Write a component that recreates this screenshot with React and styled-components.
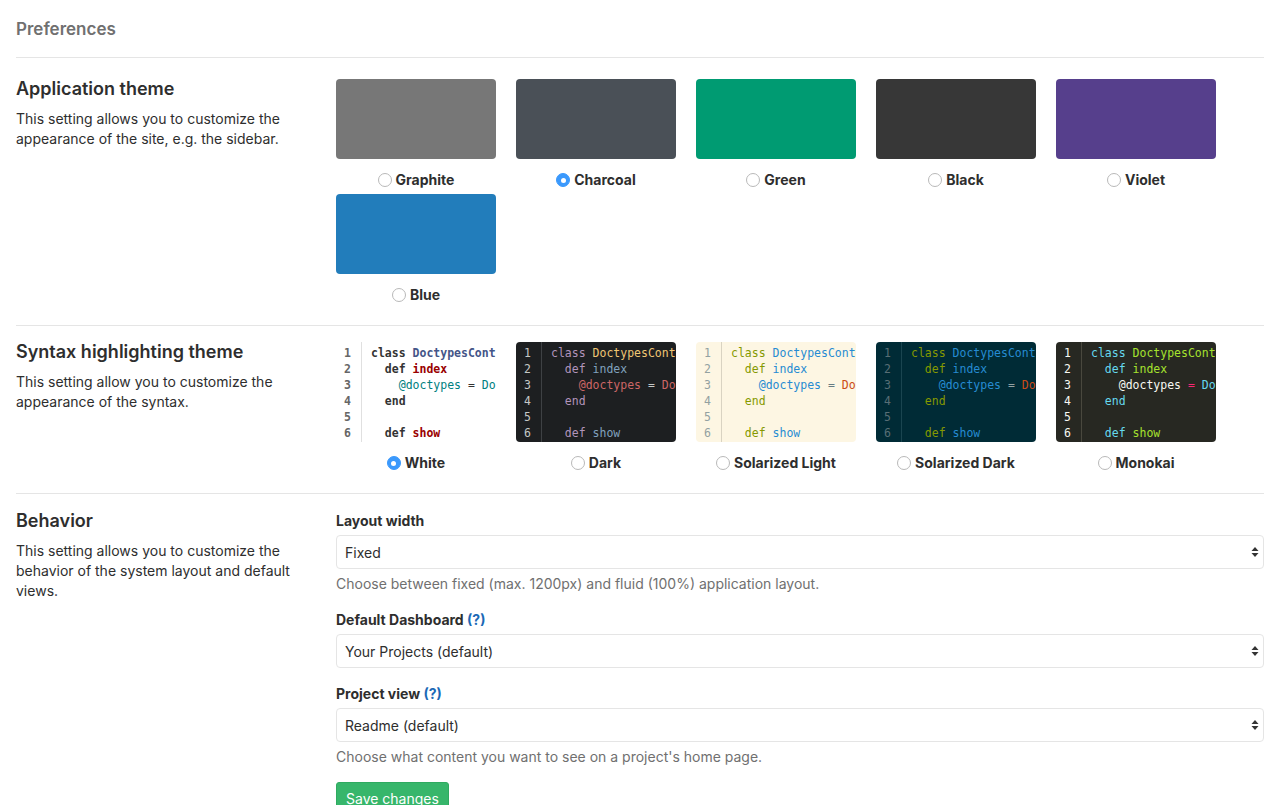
import React from "react";
import styled, { createGlobalStyle } from "styled-components";

const Global = createGlobalStyle`
  html, body { margin: 0; padding: 0; background: #fff; }
  body {
    font-family: Inter, "Noto Sans", "Liberation Sans", sans-serif;
    font-size: 14px;
    color: #2e2e2e;
    -webkit-font-smoothing: antialiased;
  }
  * { box-sizing: border-box; }
`;

const Page = styled.div`
  padding: 18px 16px 0;
`;

const Title = styled.h3`
  margin: 0;
  font-size: 17px;
  line-height: 22px;
  font-weight: 600;
  color: #707070;
`;

const Section = styled.section`
  display: grid;
  grid-template-columns: 304px 928px;
  column-gap: 16px;
  border-top: 1px solid #e5e5e5;
  margin-top: ${(p) => p.$mt || 0}px;
  padding-top: ${(p) => p.$pt}px;
  padding-bottom: ${(p) => p.$pb || 0}px;
`;

const Side = styled.div``;

const Heading = styled.h4`
  margin: 0 0 10px;
  font-size: 18px;
  line-height: 20px;
  font-weight: 600;
  color: #2e2e2e;
`;

const Desc = styled.p`
  margin: 0;
  line-height: 20px;
  color: #2e2e2e;
`;

const Options = styled.div`
  display: flex;
  flex-wrap: wrap;
  column-gap: 20px;
`;

const Option = styled.label`
  width: 160px;
  display: flex;
  flex-direction: column;
  align-items: center;
  margin-bottom: 4px;
`;

const Swatch = styled.div`
  width: 160px;
  height: 80px;
  border-radius: 4px;
  background: ${(p) => p.$color};
`;

const OptionName = styled.div`
  margin-top: 11px;
  display: flex;
  align-items: center;
  gap: 4px;
  font-weight: 700;
  line-height: 20px;
  color: #2e2e2e;
`;

const Radio = styled.span`
  width: 14px;
  height: 14px;
  border-radius: 50%;
  display: inline-flex;
  align-items: center;
  justify-content: center;
  background: ${(p) => (p.$checked ? "#3b99fc" : "#fff")};
  border: 1px solid ${(p) => (p.$checked ? "#3b99fc" : "#b9b9b9")};
  &::after {
    content: "";
    width: 5px;
    height: 5px;
    border-radius: 50%;
    background: #fff;
    display: ${(p) => (p.$checked ? "block" : "none")};
  }
`;

const Preview = styled.div`
  width: 160px;
  height: 100px;
  border-radius: 4px;
  overflow: hidden;
  display: flex;
  background: ${(p) => p.$t.bg};
  font-family: "DejaVu Sans Mono", "Liberation Mono", monospace;
  font-size: 11.5px;
  line-height: 16px;
`;

const Gutter = styled.div`
  width: 26px;
  flex: none;
  padding-top: 3px;
  padding-left: 8px;
  border-right: 1px solid ${(p) => p.$t.gutterLine};
  color: ${(p) => p.$t.num};
  font-weight: ${(p) => p.$t.numWeight || 400};
`;

const Code = styled.pre`
  margin: 0;
  padding: 3px 0 0 9px;
  white-space: pre;
  font: inherit;
  overflow: hidden;
  flex: 1;
`;

const Tok = styled.span`
  color: ${(p) => p.$t[p.$k].c};
  font-weight: ${(p) => (p.$t[p.$k].b ? 700 : 400)};
`;

const Fields = styled.div`
  display: flex;
  flex-direction: column;
`;

const FormGroup = styled.div`
  margin-bottom: ${(p) => p.$mb}px;
`;

const Label = styled.label`
  display: block;
  font-weight: 700;
  line-height: 20px;
  margin-bottom: 4px;
  color: #2e2e2e;
`;

const HelpLink = styled.a`
  color: #1b69b6;
  text-decoration: none;
`;

const SelectWrap = styled.div`
  position: relative;
  height: 34px;
`;

const Select = styled.select`
  appearance: none;
  -webkit-appearance: none;
  width: 100%;
  height: 34px;
  border: 1px solid #e5e5e5;
  border-radius: 4px;
  background: #fff;
  padding: 0 24px 0 8px;
  font-family: inherit;
  font-size: 14px;
  color: #2e2e2e;
  outline: none;
`;

const Arrows = styled.svg`
  position: absolute;
  right: 5px;
  top: 11px;
  pointer-events: none;
`;

const Help = styled.p`
  margin: 5px 0 0;
  line-height: 20px;
  color: #707070;
`;

const SaveButton = styled.button`
  align-self: flex-start;
  background: #37b66b;
  border: 1px solid #2faa60;
  border-radius: 3px;
  color: #fff;
  font-family: inherit;
  font-size: 14px;
  line-height: 20px;
  padding: 6px 9px 8px;
`;

const appThemes = [
  ["Graphite", "#777777"],
  ["Charcoal", "#4a5057", true],
  ["Green", "#009b72"],
  ["Black", "#373737"],
  ["Violet", "#563f8c"],
  ["Blue", "#227dbb"],
];

const syntaxThemes = [
  {
    name: "White",
    checked: true,
    t: {
      bg: "#ffffff",
      gutterLine: "#e0e0e0",
      num: "#666",
      numWeight: 700,
      kw: { c: "#333", b: true },
      cls: { c: "#445588", b: true },
      fn: { c: "#990000", b: true },
      ivar: { c: "#008080" },
      op: { c: "#333" },
      cst: { c: "#008080" },
      txt: { c: "#333" },
    },
  },
  {
    name: "Dark",
    t: {
      bg: "#1d1f21",
      gutterLine: "#3e4144",
      num: "#c5c8c6",
      kw: { c: "#b294bb" },
      cls: { c: "#f0c674" },
      fn: { c: "#81a2be" },
      ivar: { c: "#cc6666" },
      op: { c: "#c5c8c6" },
      cst: { c: "#cc6666" },
      txt: { c: "#c5c8c6" },
    },
  },
  {
    name: "Solarized Light",
    t: {
      bg: "#fdf6e3",
      gutterLine: "#d9d3c2",
      num: "#93a1a1",
      kw: { c: "#859900" },
      cls: { c: "#268bd2" },
      fn: { c: "#268bd2" },
      ivar: { c: "#268bd2" },
      op: { c: "#657b83" },
      cst: { c: "#cb4b16" },
      txt: { c: "#657b83" },
    },
  },
  {
    name: "Solarized Dark",
    t: {
      bg: "#002b36",
      gutterLine: "#1a4550",
      num: "#586e75",
      kw: { c: "#859900" },
      cls: { c: "#268bd2" },
      fn: { c: "#268bd2" },
      ivar: { c: "#268bd2" },
      op: { c: "#93a1a1" },
      cst: { c: "#cb4b16" },
      txt: { c: "#93a1a1" },
    },
  },
  {
    name: "Monokai",
    t: {
      bg: "#272822",
      gutterLine: "#49483e",
      num: "#f8f8f2",
      kw: { c: "#66d9ef" },
      cls: { c: "#a6e22e" },
      fn: { c: "#a6e22e" },
      ivar: { c: "#f8f8f2" },
      op: { c: "#f92672" },
      cst: { c: "#66d9ef" },
      txt: { c: "#f8f8f2" },
    },
  },
];

const codeLines = [
  [["kw", "class"], ["txt", " "], ["cls", "DoctypesController"]],
  [["txt", "  "], ["kw", "def"], ["txt", " "], ["fn", "index"]],
  [["txt", "    "], ["ivar", "@doctypes"], ["txt", " "], ["op", "="], ["txt", " "], ["cst", "DoctypesFinder"]],
  [["txt", "  "], ["kw", "end"]],
  [["txt", ""]],
  [["txt", "  "], ["kw", "def"], ["txt", " "], ["fn", "show"]],
];

function SelectArrows() {
  return (
    <Arrows width="8" height="12" viewBox="0 0 8 12">
      <path d="M4 1 L7.5 5 L0.5 5 Z" fill="#333" />
      <path d="M4 11 L7.5 7 L0.5 7 Z" fill="#333" />
    </Arrows>
  );
}

function Field({ label, help, value, helpLink, mb }) {
  return (
    <FormGroup $mb={mb}>
      <Label>
        {label}
        {helpLink && (
          <>
            {" "}
            <HelpLink href="#">(?)</HelpLink>
          </>
        )}
      </Label>
      <SelectWrap>
        <Select defaultValue={value}>
          <option>{value}</option>
        </Select>
        <SelectArrows />
      </SelectWrap>
      {help && <Help>{help}</Help>}
    </FormGroup>
  );
}

export default function App() {
  return (
    <Page>
      <Global />
      <Title>Preferences</Title>

      <Section $mt={17} $pt={21} $pb={16}>
        <Side>
          <Heading>Application theme</Heading>
          <Desc>This setting allows you to customize the appearance of the site, e.g. the sidebar.</Desc>
        </Side>
        <Options>
          {appThemes.map(([name, color, checked]) => (
            <Option key={name}>
              <Swatch $color={color} />
              <OptionName>
                <Radio $checked={!!checked} />
                {name}
              </OptionName>
            </Option>
          ))}
        </Options>
      </Section>

      <Section $pt={16} $pb={16}>
        <Side>
          <Heading>Syntax highlighting theme</Heading>
          <Desc>This setting allow you to customize the appearance of the syntax.</Desc>
        </Side>
        <Options>
          {syntaxThemes.map((s) => (
            <Option key={s.name}>
              <Preview $t={s.t}>
                <Gutter $t={s.t}>
                  {codeLines.map((_, i) => (
                    <div key={i}>{i + 1}</div>
                  ))}
                </Gutter>
                <Code>
                  {codeLines.map((line, i) => (
                    <div key={i}>
                      {line.map(([k, text], j) => (
                        <Tok key={j} $k={k} $t={s.t}>
                          {text}
                        </Tok>
                      ))}
                      {line.length === 1 && line[0][1] === "" ? "\u00a0" : null}
                    </div>
                  ))}
                </Code>
              </Preview>
              <OptionName>
                <Radio $checked={!!s.checked} />
                {s.name}
              </OptionName>
            </Option>
          ))}
        </Options>
      </Section>

      <Section $pt={17}>
        <Side>
          <Heading>Behavior</Heading>
          <Desc>This setting allows you to customize the behavior of the system layout and default views.</Desc>
        </Side>
        <Fields>
          <Field
            label="Layout width"
            value="Fixed"
            help="Choose between fixed (max. 1200px) and fluid (100%) application layout."
            mb={16}
          />
          <Field label="Default Dashboard" helpLink value="Your Projects (default)" mb={16} />
          <Field
            label="Project view"
            helpLink
            value="Readme (default)"
            help="Choose what content you want to see on a project's home page."
            mb={15}
          />
          <SaveButton>Save changes</SaveButton>
        </Fields>
      </Section>
    </Page>
  );
}
